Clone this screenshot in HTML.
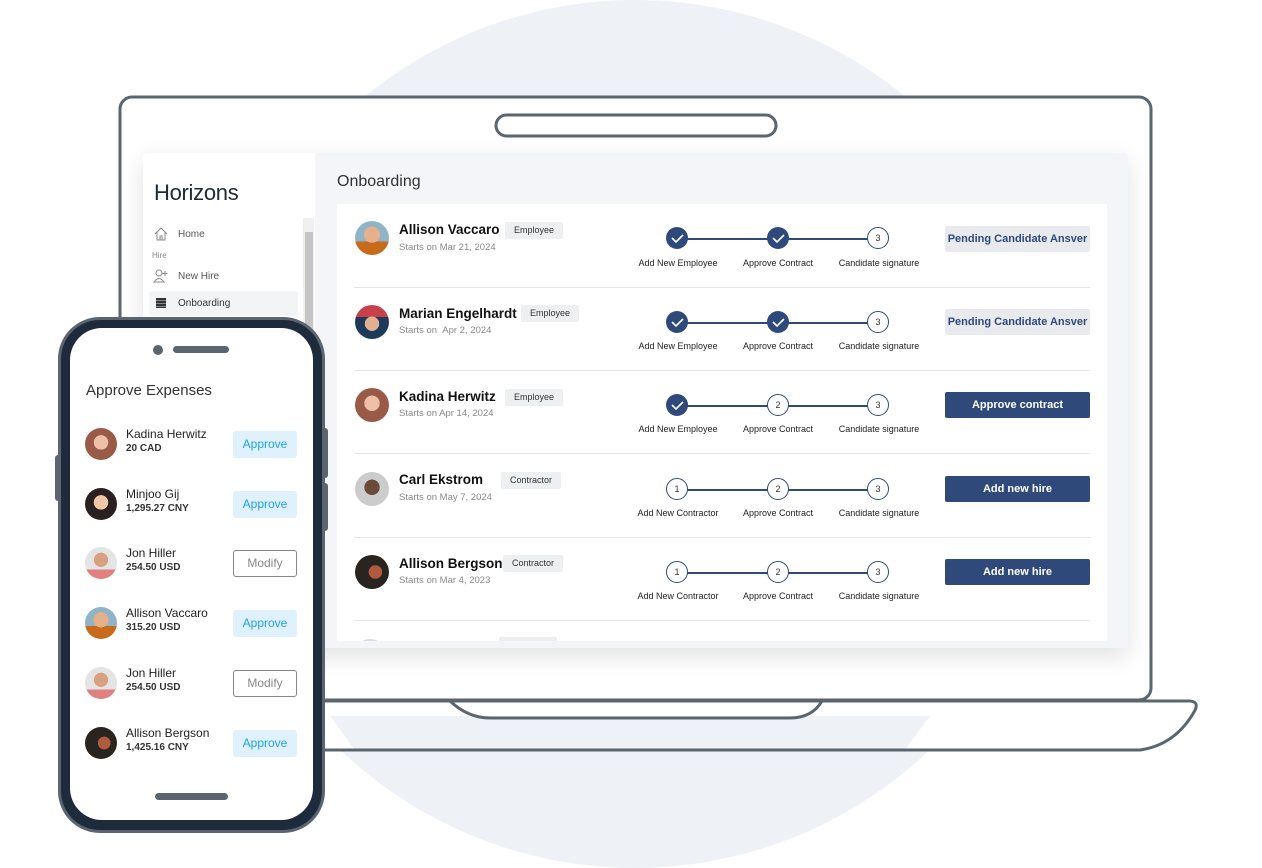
<!DOCTYPE html>
<html><head><meta charset="utf-8"><style>
*{margin:0;padding:0;box-sizing:border-box}
body{width:1262px;height:868px;position:relative;background:#fff;font-family:"Liberation Sans",sans-serif;overflow:hidden}
.a{position:absolute}
.circ{left:205px;top:0;width:860px;height:868px;border-radius:50%;background:#eef2f6}
.av{position:absolute;border-radius:50%;overflow:hidden}
.row .nm{position:absolute;font-size:13.5px;font-weight:bold;color:#111}
.row .st{position:absolute;font-size:9.5px;color:#888}
.tag{position:absolute;background:#eeeff1;border-radius:2px;font-size:9px;color:#333;height:17px;line-height:17px;padding:0 9px}
.dot{position:absolute;width:22px;height:22px;border-radius:50%;background:#2f4a7a;}
.ring{position:absolute;width:22px;height:22px;border-radius:50%;background:#fff;border:1px solid #2f4a7a;font-size:9px;color:#333;text-align:center;line-height:20px}
.ln{position:absolute;height:1.5px;background:#2f4a7a}
.lb{position:absolute;font-size:9px;color:#222;width:110px;text-align:center}
.btn{position:absolute;left:945px;width:145px;height:26px;border-radius:2px;font-size:11px;font-weight:bold;text-align:center;line-height:26px}
.pend{background:#e8eaee;color:#2f4a7a}
.dark{background:#2f4a7a;color:#fff}
.div{position:absolute;left:354px;width:736px;height:1px;background:#e3e6ea}
.pr .n{position:absolute;left:126px;font-size:12px;color:#222}
.pr .m{position:absolute;left:126px;font-size:10px;font-weight:bold;color:#333}
.pb{position:absolute;left:233px;width:64px;height:27px;border-radius:3px;font-size:12px;text-align:center;line-height:27px}
.ap{background:#dff1fd;color:#1ea1e8}
.mo{background:#fff;border:1px solid #888;color:#888;line-height:25px}
</style></head><body>
<div class="a circ"></div>
<svg class="a" style="left:0;top:0" width="1262" height="868">
<path d="M100 701 L1190 701 Q1200 702 1194 712 Q1175 745 1140 750 L100 750 Z" fill="#fff"/>
<path d="M330 716 L930 716 L905 750 L355 750 Z" fill="#eef2f6"/>
<path d="M450 701 Q 468 718 490 718 L 790 718 Q 812 718 822 701" fill="none" stroke="#5b6570" stroke-width="3"/>
<path d="M100 701 L1190 701 Q1200 702 1194 712 Q1175 745 1140 750 L100 750" fill="none" stroke="#5b6570" stroke-width="3"/>
<rect x="120" y="97" width="1031" height="603" rx="12" fill="#fff" stroke="#5b6570" stroke-width="3"/>
<rect x="496" y="115" width="280" height="21" rx="10.5" fill="#fff" stroke="#5b6570" stroke-width="3"/>
</svg>
<div class="a" style="left:143px;top:153px;width:985px;height:495px;background:#f3f5f8;border-radius:4px;box-shadow:0 8px 24px rgba(0,0,0,.12)"></div>
<div class="a" style="left:143px;top:153px;width:172px;height:495px;background:#fff;border-radius:4px 0 0 4px"></div>
<div class="a" style="left:154px;top:180px;font-size:22px;color:#1f2937;letter-spacing:-.3px">Horizons</div>
<div class="a" style="left:303px;top:218px;width:11px;height:120px;background:#f0f0f0"></div>
<div class="a" style="left:305px;top:232px;width:8px;height:110px;background:#c5c5c5"></div>
<svg class="a" style="left:153px;top:226px" width="16" height="16"><path d="M2 8 L8 2 L14 8 M4 6 V14 H12 V6 M7 14 V10 H9 V14" fill="none" stroke="#888" stroke-width="1"/></svg>
<div class="a" style="left:178px;top:229px;font-size:10px;color:#555">Home</div>
<div class="a" style="left:152px;top:251px;font-size:8px;color:#888">Hire</div>
<svg class="a" style="left:153px;top:268px" width="16" height="16"><circle cx="6" cy="5" r="3" fill="none" stroke="#888"/><path d="M1 14 Q6 7 11 14 Z" fill="none" stroke="#888"/><path d="M12 3 V8 M9.5 5.5 H14.5" stroke="#888"/></svg>
<div class="a" style="left:178px;top:271px;font-size:10px;color:#555">New Hire</div>
<div class="a" style="left:149px;top:291px;width:149px;height:25px;background:#f3f4f6;border-radius:4px"></div>
<div class="a" style="left:156px;top:298px;width:10px;height:10px;background:repeating-linear-gradient(#333 0 2px,#888 2px 3px)"></div>
<div class="a" style="left:178px;top:298px;font-size:10px;color:#333">Onboarding</div>
<div class="a" style="left:337px;top:173px;font-size:16px;color:#333">Onboarding</div>
<div class="a" style="left:337px;top:204px;width:770px;height:437px;background:#fff;overflow:hidden">
<div class="a" style="left:18px;top:435px;width:30px;height:30px;border-radius:50%;background:#ddd"></div>
<div class="a" style="left:162px;top:433px;width:58px;height:10px;background:#eee"></div>
</div>
<div class="row">
<div class="av" style="left:355px;top:221px;width:34px;height:34px;background:radial-gradient(circle at 50% 40%,#e6b08a 0 30%,transparent 31%),linear-gradient(#8fb4c8 60%,#c86a1c 60%)"></div>
<div class="nm" style="left:399px;top:222px">Allison Vaccaro</div><div class="tag" style="left:505px;top:222px">Employee</div>
<div class="st" style="left:399px;top:242px">Starts on Mar 21, 2024</div>
<div class="av" style="left:355px;top:305px;width:34px;height:34px;background:radial-gradient(circle at 50% 55%,#e0b090 0 28%,transparent 29%),linear-gradient(#c8404a 35%,#1e3a5a 35%)"></div>
<div class="nm" style="left:399px;top:306px">Marian Engelhardt</div><div class="tag" style="left:521px;top:305px">Employee</div>
<div class="st" style="left:399px;top:325px">Starts on &nbsp;Apr 2, 2024</div>
<div class="av" style="left:355px;top:388px;width:34px;height:34px;background:radial-gradient(circle at 50% 45%,#eec0a8 0 30%,#9a5a48 31%)"></div>
<div class="nm" style="left:399px;top:389px">Kadina Herwitz</div><div class="tag" style="left:505px;top:389px">Employee</div>
<div class="st" style="left:399px;top:408px">Starts on Apr 14, 2024</div>
<div class="av" style="left:355px;top:472px;width:34px;height:34px;background:radial-gradient(circle at 50% 45%,#6a4a38 0 30%,#ccc 31%)"></div>
<div class="nm" style="left:399px;top:472px">Carl Ekstrom</div><div class="tag" style="left:501px;top:472px">Contractor</div>
<div class="st" style="left:399px;top:492px">Starts on May 7, 2024</div>
<div class="av" style="left:355px;top:555px;width:34px;height:34px;background:radial-gradient(circle at 60% 50%,#b05a40 0 25%,#2a2420 26%)"></div>
<div class="nm" style="left:399px;top:556px">Allison Bergson</div><div class="tag" style="left:503px;top:555px">Contractor</div>
<div class="st" style="left:399px;top:575px">Starts on Mar 4, 2023</div>
</div>
<div class="div" style="top:287px"></div><div class="div" style="top:370px"></div><div class="div" style="top:453px"></div><div class="div" style="top:537px"></div><div class="div" style="top:620px"></div>
<div>
<div class="ln" style="left:677px;top:238px;width:201px"></div>
<div class="dot" style="left:666px;top:227px"></div><div class="dot" style="left:767px;top:227px"></div><div class="ring" style="left:867px;top:227px">3</div>
<div class="ln" style="left:677px;top:322px;width:201px"></div>
<div class="dot" style="left:666px;top:311px"></div><div class="dot" style="left:767px;top:311px"></div><div class="ring" style="left:867px;top:311px">3</div>
<div class="ln" style="left:677px;top:405px;width:201px"></div>
<div class="dot" style="left:666px;top:394px"></div><div class="ring" style="left:767px;top:394px">2</div><div class="ring" style="left:867px;top:394px">3</div>
<div class="ln" style="left:677px;top:489px;width:201px"></div>
<div class="ring" style="left:666px;top:478px">1</div><div class="ring" style="left:767px;top:478px">2</div><div class="ring" style="left:867px;top:478px">3</div>
<div class="ln" style="left:677px;top:572px;width:201px"></div>
<div class="ring" style="left:666px;top:561px">1</div><div class="ring" style="left:767px;top:561px">2</div><div class="ring" style="left:867px;top:561px">3</div>
</div>
<svg class="a" style="left:0;top:0;pointer-events:none" width="1262" height="868" fill="none" stroke="#fff" stroke-width="1.6">
<path d="M672 238 l4 4 l7 -7"/><path d="M773 238 l4 4 l7 -7"/>
<path d="M672 322 l4 4 l7 -7"/><path d="M773 322 l4 4 l7 -7"/>
<path d="M672 405 l4 4 l7 -7"/>
</svg>
<div class="lb" style="left:623px;top:258px">Add New Employee</div><div class="lb" style="left:723px;top:258px">Approve Contract</div><div class="lb" style="left:824px;top:258px">Candidate signature</div>
<div class="lb" style="left:623px;top:341px">Add New Employee</div><div class="lb" style="left:723px;top:341px">Approve Contract</div><div class="lb" style="left:824px;top:341px">Candidate signature</div>
<div class="lb" style="left:623px;top:424px">Add New Employee</div><div class="lb" style="left:723px;top:424px">Approve Contract</div><div class="lb" style="left:824px;top:424px">Candidate signature</div>
<div class="lb" style="left:623px;top:508px">Add New Contractor</div><div class="lb" style="left:723px;top:508px">Approve Contract</div><div class="lb" style="left:824px;top:508px">Candidate signature</div>
<div class="lb" style="left:623px;top:591px">Add New Contractor</div><div class="lb" style="left:723px;top:591px">Approve Contract</div><div class="lb" style="left:824px;top:591px">Candidate signature</div>
<div class="btn pend" style="top:226px">Pending Candidate Ansver</div>
<div class="btn pend" style="top:309px">Pending Candidate Ansver</div>
<div class="btn dark" style="top:392px">Approve contract</div>
<div class="btn dark" style="top:476px">Add new hire</div>
<div class="btn dark" style="top:559px">Add new hire</div>
<div class="a" style="left:55px;top:455px;width:8px;height:46px;background:#5b6570;border-radius:3px"></div>
<div class="a" style="left:320px;top:428px;width:8px;height:50px;background:#5b6570;border-radius:3px"></div>
<div class="a" style="left:320px;top:483px;width:8px;height:48px;background:#5b6570;border-radius:3px"></div>
<div class="a" style="left:58px;top:317px;width:267px;height:516px;border-radius:42px;background:#1e2b3c;border:3px solid #5b6570"></div>
<div class="a" style="left:70px;top:328px;width:243px;height:492px;border-radius:32px;background:#fff"></div>
<div class="a" style="left:153px;top:345px;width:10px;height:10px;border-radius:50%;background:#5b6570"></div>
<div class="a" style="left:173px;top:346px;width:56px;height:7px;border-radius:4px;background:#5b6570"></div>
<div class="a" style="left:155px;top:793px;width:73px;height:7px;border-radius:4px;background:#5b6570"></div>
<div class="a" style="left:86px;top:382px;font-size:15px;color:#333">Approve Expenses</div>
<div class="pr">
<div class="av" style="left:85px;top:428px;width:32px;height:32px;background:radial-gradient(circle at 50% 45%,#eec0a8 0 30%,#9a5a48 31%)"></div>
<div class="n" style="top:427px">Kadina Herwitz</div><div class="m" style="top:443px">20 CAD</div>
<div class="pb ap" style="top:431px">Approve</div>
<div class="av" style="left:85px;top:488px;width:32px;height:32px;background:radial-gradient(circle at 50% 45%,#f0c8a8 0 30%,#2a2020 31%)"></div>
<div class="n" style="top:487px">Minjoo Gij</div><div class="m" style="top:503px">1,295.27 CNY</div>
<div class="pb ap" style="top:491px">Approve</div>
<div class="av" style="left:85px;top:547px;width:32px;height:32px;background:radial-gradient(circle at 50% 40%,#d8a080 0 28%,transparent 29%),linear-gradient(#e4e4e4 70%,#e08080 70%)"></div>
<div class="n" style="top:546px">Jon Hiller</div><div class="m" style="top:562px">254.50 USD</div>
<div class="pb mo" style="top:550px">Modify</div>
<div class="av" style="left:85px;top:607px;width:32px;height:32px;background:radial-gradient(circle at 50% 40%,#e6b08a 0 30%,transparent 31%),linear-gradient(#8fb4c8 60%,#c86a1c 60%)"></div>
<div class="n" style="top:606px">Allison Vaccaro</div><div class="m" style="top:622px">315.20 USD</div>
<div class="pb ap" style="top:610px">Approve</div>
<div class="av" style="left:85px;top:667px;width:32px;height:32px;background:radial-gradient(circle at 50% 40%,#d8a080 0 28%,transparent 29%),linear-gradient(#e4e4e4 70%,#e08080 70%)"></div>
<div class="n" style="top:666px">Jon Hiller</div><div class="m" style="top:682px">254.50 USD</div>
<div class="pb mo" style="top:670px">Modify</div>
<div class="av" style="left:85px;top:727px;width:32px;height:32px;background:radial-gradient(circle at 60% 50%,#b05a40 0 25%,#2a2420 26%)"></div>
<div class="n" style="top:726px">Allison Bergson</div><div class="m" style="top:742px">1,425.16 CNY</div>
<div class="pb ap" style="top:730px">Approve</div>
</div>
</body></html>
